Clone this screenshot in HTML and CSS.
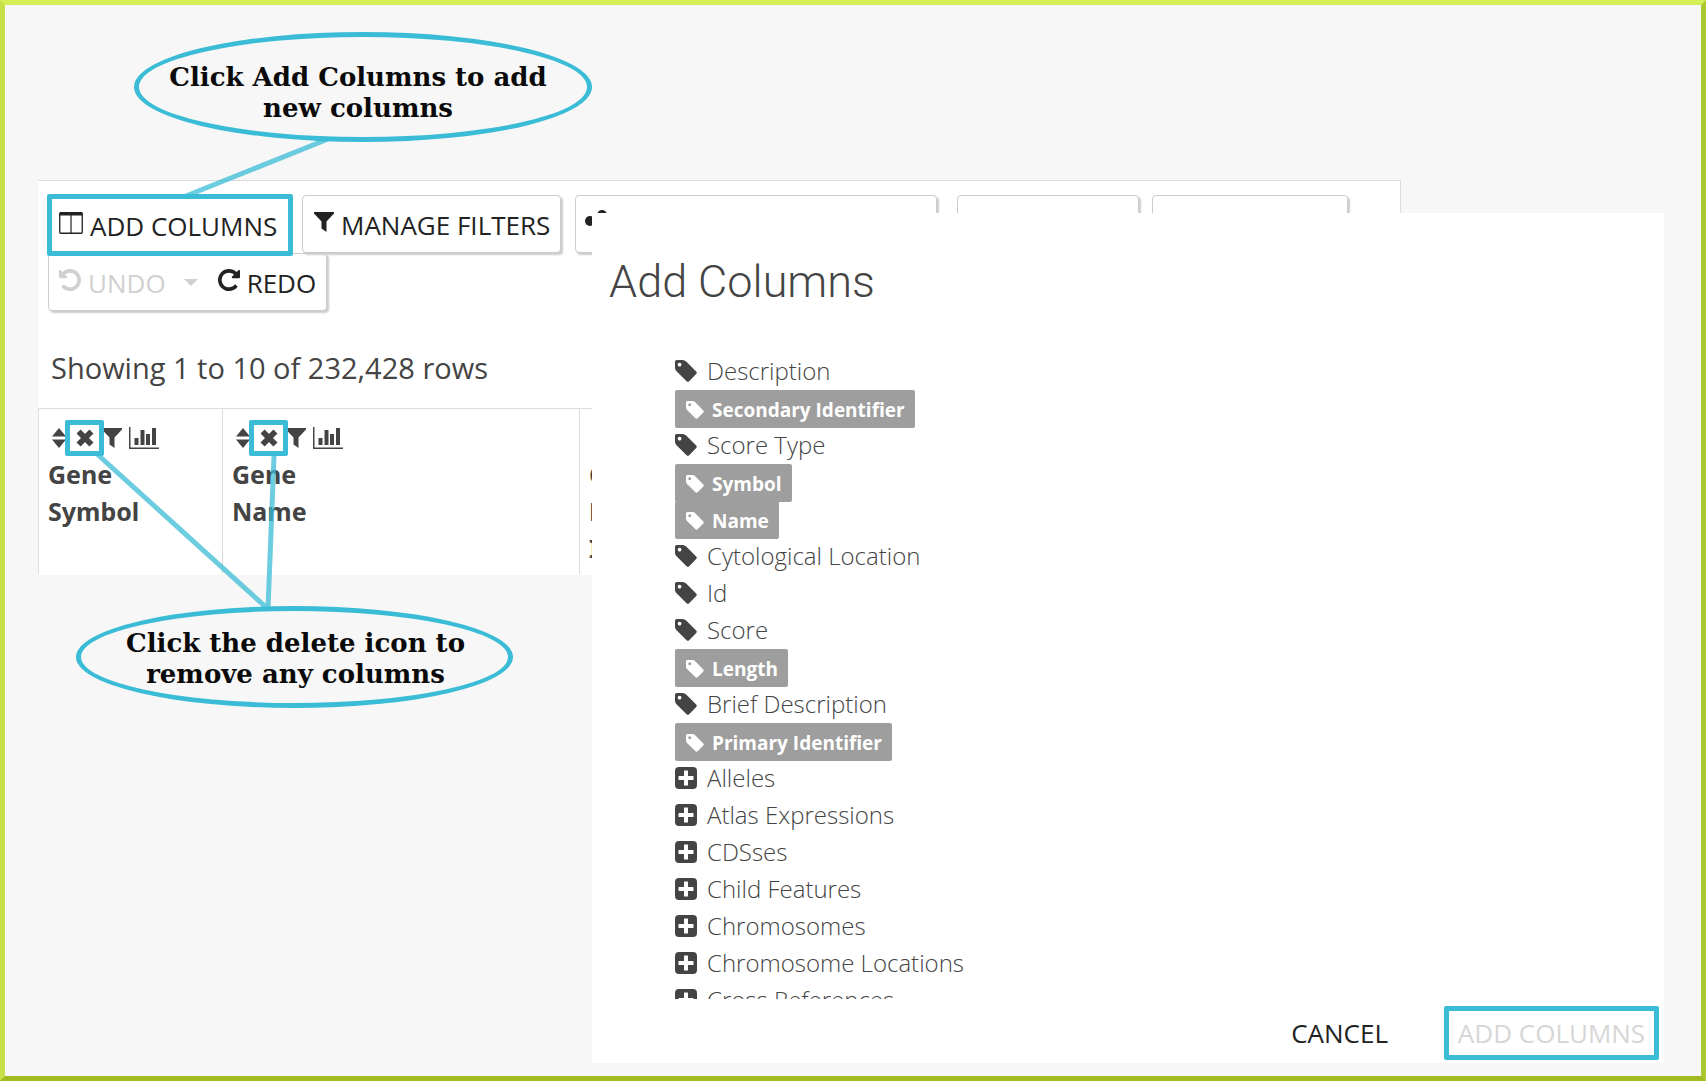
FILE: index.html
```html
<!DOCTYPE html>
<html lang="en">
<head>
<meta charset="utf-8">
<title>Add Columns</title>
<link rel="stylesheet" href="styles.css">
</head>
<body>
<svg class="sprite" aria-hidden="true">
  <symbol id="i-columns" viewBox="0 0 24 22"><rect x=".75" y=".75" width="22.5" height="20.5" rx="1" fill="none" stroke="currentColor" stroke-width="1.3"/><path d="M.5 1.500q0-1.500 1.500-1.500h20q1.500 0 1.500 1.500v2h-23zM11.400 3h1.200v18h-1.200z"/></symbol>
  <symbol id="i-filter" viewBox="0 0 20 20"><path d="M0 0h20v1.500L12.500 9.500V20L7.500 16.500V9.500L0 1.500z"/></symbol>
  <symbol id="i-undo" viewBox="0 128 1536 1536"><path d="M1536 896q0 156-61 298t-164 245-245 164-298 61q-172 0-327-72.500t-264-204.500q-7-10-6.500-22.500t8.500-20.500l137-138q10-9 25-9 16 2 23 12 73 95 179 147t225 52q104 0 198.500-40.500t163.500-109.500 109.500-163.500 40.500-198.500-40.500-198.500-109.500-163.500-163.500-109.500-198.500-40.500q-98 0-188 35.500t-160 101.500l137 138q31 30 14 69-17 40-59 40h-448q-26 0-45-19t-19-45v-448q0-42 40-59 39-17 69 14l130 129q107-101 244.500-156.500t284.500-55.500q156 0 298 61t245 164 164 245 61 298z"/></symbol>
  <symbol id="i-tag" viewBox="0 128 1536 1536"><path d="M448 448q0-53-37.500-90.500t-90.500-37.500-90.500 37.500-37.500 90.500 37.500 90.500 90.500 37.500 90.500-37.500 37.500-90.500zm1067 576q0 53-37 90l-491 492q-39 37-91 37-53 0-90-37l-715-716q-38-37-64.500-101t-26.500-117v-416q0-52 38-90t90-38h416q53 0 117 26.500t102 64.500l715 714q37 39 37 91z"/></symbol>
  <symbol id="i-plus" viewBox="0 0 22 22"><path fill-rule="evenodd" d="M4 0h14q4 0 4 4v14q0 4-4 4H4q-4 0-4-4V4q0-4 4-4zM9.500 3.500q-.5 0-.5.5v5H4q-.5 0-.5.5v3q0 .5.5.5h5v5q0 .5.5.5h3q.5 0 .5-.5v-5h5q.5 0 .5-.5v-3q0-.5-.5-.5h-5V4q0-.5-.5-.5z"/></symbol>
  <symbol id="i-sort" viewBox="0 0 14 20"><path d="M7 0l7 8.500H0zM7 20l7-8.500H0z"/></symbol>
  <symbol id="i-remove" viewBox="0 0 18 18"><path d="M3.200 3.200l11.600 11.600M14.800 3.200L3.200 14.800" stroke="currentColor" stroke-width="5.200"/></symbol>
  <symbol id="i-chart" viewBox="0 0 30 22"><path d="M0 0h1.500v20.500H30V22H0zM5.500 11h4v7h-4zM11.500 3h4v15h-4zM17 7h4v11h-4zM23 1h4v17h-4z"/></symbol>
  <symbol id="i-share" viewBox="0 0 24 22"><path d="M5 11L17 5M5 11l12 6" stroke="currentColor" stroke-width="2"/><circle cx="5" cy="11" r="5"/><circle cx="17" cy="5" r="5"/><circle cx="17" cy="17" r="5"/></symbol>
</svg>

<div class="frame">
  <main class="panel">
    <div class="toolbar">
      <button class="tool tool-marked"><svg class="icon-columns"><use href="#i-columns"/></svg>ADD COLUMNS</button>
      <button class="tool tool-filters"><svg class="icon-filter"><use href="#i-filter"/></svg>MANAGE FILTERS</button>
      <button class="tool tool-relations" aria-label="Relationships"><svg class="icon-columns"><use href="#i-share"/></svg></button>
      <button class="tool tool-save" aria-label="Save"></button>
      <button class="tool tool-export" aria-label="Export"></button>
    </div>
    <div class="history">
      <button class="step" disabled><svg class="icon-step"><use href="#i-undo"/></svg>UNDO<span class="caret"></span></button>
      <button class="step"><svg class="icon-step flip"><use href="#i-undo"/></svg>REDO</button>
    </div>
    <p class="summary">Showing 1 to 10 of 232,428 rows</p>
    <table class="results">
      <thead>
        <tr>
          <th class="col-symbol">
            <div class="controls"><svg class="icon-sort"><use href="#i-sort"/></svg><button class="remove" aria-label="Remove column"><svg><use href="#i-remove"/></svg></button><svg class="icon-filter"><use href="#i-filter"/></svg><svg class="icon-chart"><use href="#i-chart"/></svg></div>
            Gene<br>Symbol
          </th>
          <th class="col-name">
            <div class="controls"><svg class="icon-sort"><use href="#i-sort"/></svg><button class="remove" aria-label="Remove column"><svg><use href="#i-remove"/></svg></button><svg class="icon-filter"><use href="#i-filter"/></svg><svg class="icon-chart"><use href="#i-chart"/></svg></div>
            Gene<br>Name
          </th>
          <th>
            <div class="controls"></div>
            Gene<br>Primary<br>Identifier
          </th>
        </tr>
      </thead>
    </table>
  </main>

  <section class="dialog" role="dialog" aria-labelledby="dialog-title">
    <h1 id="dialog-title">Add Columns</h1>
    <ul class="fields">
      <li><svg><use href="#i-tag"/></svg>Description</li>
      <li class="chosen"><span><svg><use href="#i-tag"/></svg>Secondary Identifier</span></li>
      <li><svg><use href="#i-tag"/></svg>Score Type</li>
      <li class="chosen"><span><svg><use href="#i-tag"/></svg>Symbol</span></li>
      <li class="chosen"><span><svg><use href="#i-tag"/></svg>Name</span></li>
      <li><svg><use href="#i-tag"/></svg>Cytological Location</li>
      <li><svg><use href="#i-tag"/></svg>Id</li>
      <li><svg><use href="#i-tag"/></svg>Score</li>
      <li class="chosen"><span><svg><use href="#i-tag"/></svg>Length</span></li>
      <li><svg><use href="#i-tag"/></svg>Brief Description</li>
      <li class="chosen"><span><svg><use href="#i-tag"/></svg>Primary Identifier</span></li>
      <li><svg><use href="#i-plus"/></svg>Alleles</li>
      <li><svg><use href="#i-plus"/></svg>Atlas Expressions</li>
      <li><svg><use href="#i-plus"/></svg>CDSses</li>
      <li><svg><use href="#i-plus"/></svg>Child Features</li>
      <li><svg><use href="#i-plus"/></svg>Chromosomes</li>
      <li><svg><use href="#i-plus"/></svg>Chromosome Locations</li>
      <li><svg><use href="#i-plus"/></svg>Cross References</li>
    </ul>
    <footer class="actions">
      <button class="cancel">CANCEL</button>
      <button class="confirm" disabled>ADD COLUMNS</button>
    </footer>
  </section>

  <svg class="pointers" width="600" height="640" aria-hidden="true">
    <path d="M323 134L181 191M92 449L263 604M269 451L263 604"/>
  </svg>
  <p class="callout callout-add">Click Add Columns to add<br>new columns</p>
  <p class="callout callout-remove">Click the delete icon to<br>remove any columns</p>
</div>
</body>
</html>
```
FILE: styles.css
```css
* { box-sizing: border-box; }

body {
  margin: 0;
  background: #f7f7f7;
  color: #444;
  font-family: "Noto Sans", "Open Sans", sans-serif;
}

svg { fill: currentColor; flex: none; }
button { font: inherit; background: none; border: 0; padding: 0; margin: 0; }
.sprite { display: none; }

.frame {
  position: relative;
  min-height: 100vh;
  padding: 175px 300px 0 33px;
  border: 5px solid;
  border-color: #d4ee57 #aac930 #a3bb20 #c8e14a;
}

.panel {
  height: 395px;
  background: #fff;
  border-top: 1px solid #ddd;
  border-right: 1px solid #ddd;
}

/* toolbar */
.toolbar { display: flex; align-items: flex-start; padding: 13px 0 0 9px; position: relative; }

.tool, .history {
  border: 1px solid #ccc;
  border-radius: 4px;
  box-shadow: 2px 2px 2px #ccc;
  background: #fff;
}

.tool, .step, .actions {
  color: #222;
  font: 500 26px/32px "Open Sans", sans-serif;
  white-space: nowrap;
}

.tool {
  display: flex;
  align-items: center;
  height: 58px;
  margin-top: 1px;
  padding: 1px 11px 0;
}

.tool svg, .step svg { margin: 0 7px 6px 0; }

.tool-marked {
  width: 246px;
  height: 62px;
  margin-top: 0;
  padding: 1px 7px 0;
  border: 5px solid #3bbcd6;
  border-radius: 2px;
  box-shadow: none;
}
.tool-filters { width: 259px; margin-left: 9px; }
.tool-relations { width: 362px; margin-left: 14px; padding: 0 9px; }
.tool-save { width: 182px; margin-left: 20px; }
.tool-export { width: 196px; margin-left: 13px; }

.icon-columns { width: 24px; height: 22px; }
.icon-filter { width: 20px; height: 20px; }
.icon-step { width: 22px; height: 22px; }
.flip { transform: scaleX(-1); }

.history {
  display: flex;
  width: 279px;
  height: 58px;
  margin: -3px 0 0 10px;
  padding: 1px 0 0 10px;
}

.step { display: flex; align-items: center; }
.step:disabled { color: #d0d0d0; }

.caret {
  margin: 0 20px 0 18px;
  border: 7px solid transparent;
  border-top-color: currentColor;
  border-bottom: 0;
}

.summary {
  margin: 37px 0 0 13px;
  font: 29px/40px "Open Sans", sans-serif;
}

/* results table */
.results {
  width: 100%;
  height: 166px;
  margin-top: 20px;
  border-collapse: separate;
  border-spacing: 0;
}
.results th {
  padding: 12px 0 0 9px;
  border: solid #ddd;
  border-width: 1px 0 0 1px;
  text-align: left;
  vertical-align: top;
  font-size: 25px;
  line-height: 37px;
}
.col-symbol { width: 184px; }
.col-name { width: 357px; }

.controls { display: flex; align-items: center; height: 36px; margin: -1px 0 0 4px; }
.icon-sort { width: 14px; height: 20px; }
.icon-chart { width: 30px; height: 22px; margin-left: 7px; }
.remove {
  position: relative;
  display: flex;
  align-items: center;
  justify-content: center;
  width: 39px;
  height: 36px;
  margin: 0 -2px 0 -1px;
  border: 5px solid #3bbcd6;
  border-radius: 2px;
  color: #444;
}
.remove svg { width: 20px; height: 20px; }

/* dialog */
.dialog {
  position: absolute;
  top: 208px;
  left: 587px;
  right: 37px;
  background: #fff;
}
.dialog h1 {
  margin: 0;
  padding: 42px 17px 44px;
  font: 300 45px/53px Roboto, sans-serif;
}
.fields {
  height: 647px;
  margin: 0;
  padding: 0 83px;
  list-style: none;
  overflow: hidden;
  font-family: "Open Sans", sans-serif;
  font-size: 24px;
  font-weight: 300;
  line-height: 37px;
}
.fields li { display: flex; align-items: center; height: 37px; }
.fields li > svg { width: 22px; height: 22px; margin-right: 10px; }
.fields .chosen span {
  display: flex;
  align-items: center;
  height: 38px;
  margin-top: 3px;
  padding: 2px 10px 0 11px;
  border-radius: 2px;
  background: #9e9e9e;
  color: #fff;
  font-size: 19px;
  font-weight: 700;
}
.fields .chosen svg { width: 18px; height: 18px; margin-right: 8px; }

.actions {
  display: flex;
  align-items: center;
  justify-content: flex-end;
  gap: 56px;
  padding: 7px 5px 3px 0;
}
.cancel { color: #222; }
.confirm {
  width: 215px;
  height: 54px;
  border: 5px solid #3bbcd6;
  border-radius: 2px;
  color: #d6d6d6;
}

/* callouts */
.pointers { position: absolute; top: 0; left: 0; fill: none; stroke: #3bbcd6; stroke-width: 5; opacity: .75; }
.callout {
  position: absolute;
  display: flex;
  align-items: center;
  justify-content: center;
  margin: 0;
  border: 5px solid #3bbcd6;
  border-radius: 50%;
  color: #0a0a0a;
  font: 700 26px/31px "DejaVu Serif", serif;
  text-align: center;
  white-space: nowrap;
}
.callout-add { top: 27px; left: 129px; width: 458px; height: 110px; padding: 12px 10px 0 0; }
.callout-remove { top: 601px; left: 71px; width: 437px; height: 102px; padding: 3px 0 0 2px; }
```
